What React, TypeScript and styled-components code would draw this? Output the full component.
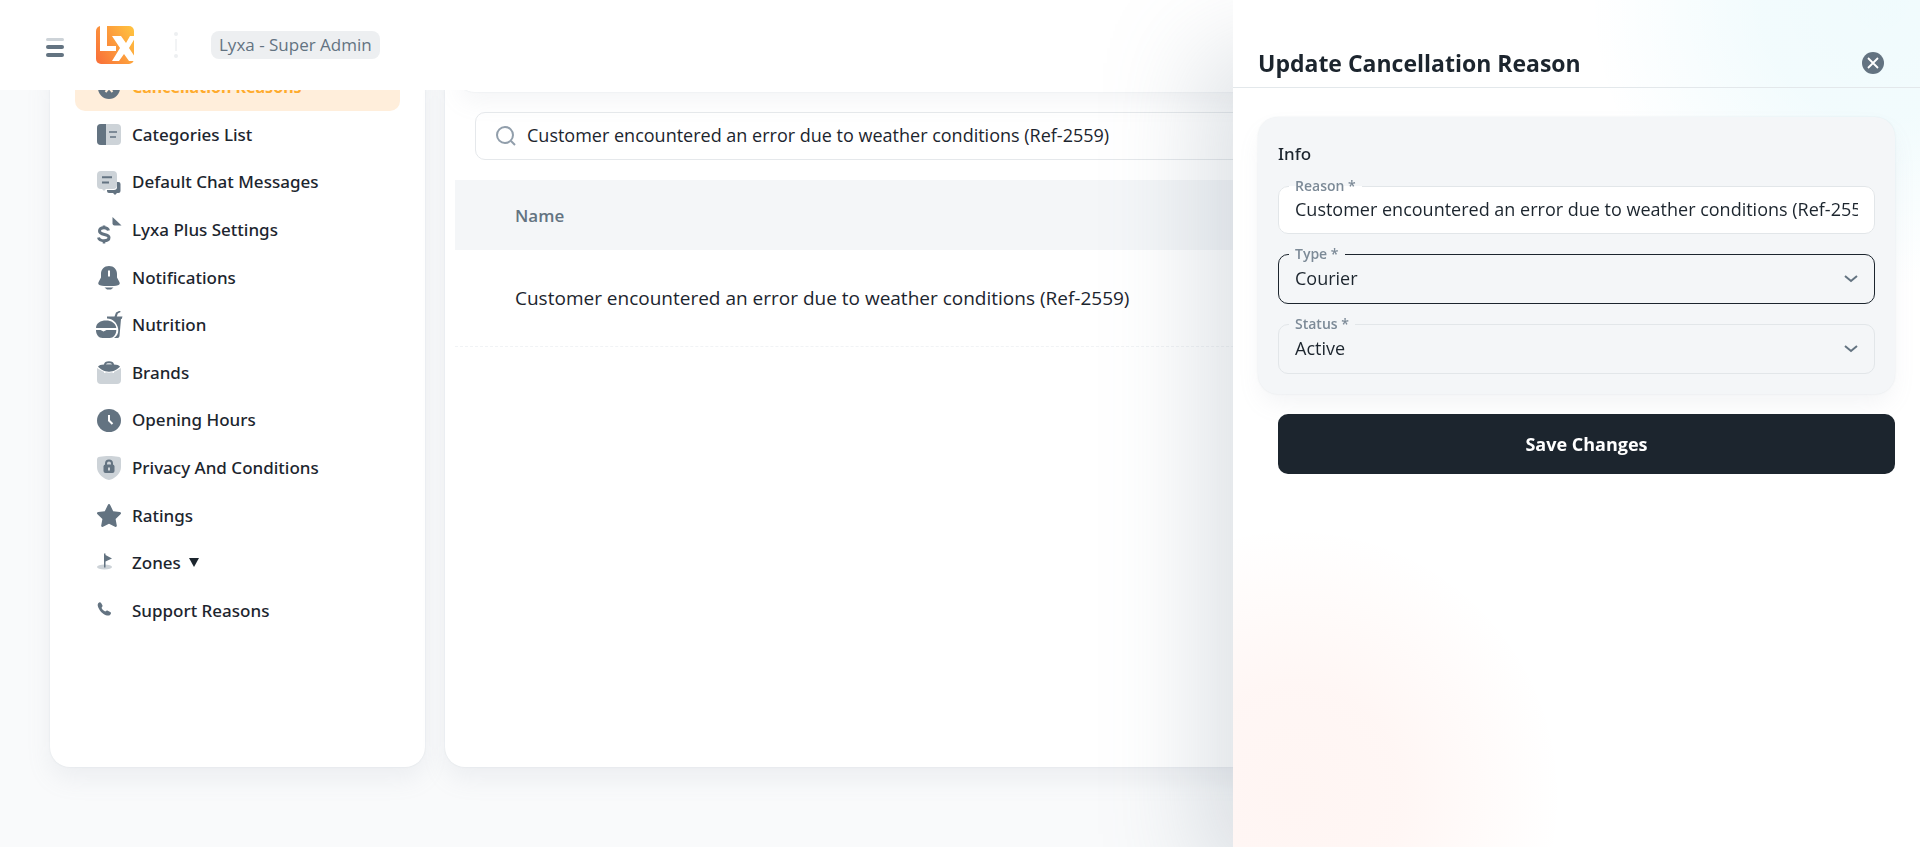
import React from "react";
import styled, { createGlobalStyle, css } from "styled-components";

const SANS = '"Open Sans", "Noto Sans", sans-serif';
const MEDIUM_SANS = '"Noto Sans", "Open Sans", sans-serif';

const GlobalStyle = createGlobalStyle`
  *, *::before, *::after { box-sizing: border-box; }
  body {
    margin: 0;
    background: #f9fafb;
    color: #1c252e;
    font-family: ${SANS};
    font-size: 17px;
  }
  button, input, select { font-family: inherit; color: inherit; }
`;

const Page = styled.div`
  display: flex;
  flex-direction: column;
  height: 100vh;
  overflow: hidden;
`;

const Header = styled.header`
  position: relative;
  z-index: 1;
  display: flex;
  flex: none;
  align-items: center;
  height: 90px;
  padding: 0 44px;
  background: #fff;
`;

const MenuButton = styled.button`
  display: flex;
  padding: 0;
  border: 0;
  background: none;
  cursor: pointer;
`;

const LogoLink = styled.a`
  display: flex;
  margin-left: 29px;
`;

const Separator = styled.svg`
  margin-left: 38px;
`;

const RoleBadge = styled.span`
  margin-left: 32px;
  padding: 0 8px;
  border-radius: 8px;
  background: #edeff1;
  color: #637381;
  font-size: 17px;
  line-height: 28px;
`;

const Body = styled.div`
  display: grid;
  grid-template-columns: 375px minmax(0, 1fr);
  gap: 20px;
  flex: 1;
  margin-top: -27px;
  padding: 0 50px 80px;
`;

const cardShadow = css`
  box-shadow: 0 0 2px rgba(145, 158, 171, 0.2), 0 12px 24px -4px rgba(145, 158, 171, 0.12);
`;

const Sidebar = styled.aside`
  padding: 0 25px;
  border-radius: 0 0 20px 20px;
  background: #fff;
  box-shadow: 0 0 2px rgba(145, 158, 171, 0.2), 0 12px 24px rgba(145, 158, 171, 0.12);
`;

const NavList = styled.ul`
  display: grid;
  grid-auto-rows: 1fr;
  height: 571px;
  margin: 0;
  padding: 0;
  list-style: none;
`;

const NavLink = styled.a<{ $active?: boolean }>`
  display: flex;
  align-items: center;
  gap: 8px;
  height: 100%;
  padding-left: 21px;
  border-radius: 10px;
  background: ${(p) => (p.$active ? "#ffeedb" : "transparent")};
  color: ${(p) => (p.$active ? "#ffab2d" : "#1c252e")};
  font-family: ${MEDIUM_SANS};
  font-size: ${(p) => (p.$active ? 16 : 17)}px;
  font-weight: ${(p) => (p.$active ? 700 : 500)};
  text-decoration: none;
`;

const Main = styled.main`
  display: flex;
  flex-direction: column;
  border-radius: 0 0 20px 20px;
  background: #fff;
  box-shadow: 0 0 2px rgba(145, 158, 171, 0.2), 0 12px 24px rgba(145, 158, 171, 0.12);
`;

const FilterCard = styled.section`
  flex: none;
  height: 29px;
  margin: 0 10px;
  border-radius: 0 0 20px 20px;
  background: #fff;
  ${cardShadow}
`;

const SearchBox = styled.label`
  display: flex;
  flex: none;
  align-items: center;
  gap: 10px;
  height: 48px;
  margin: 20px 30px;
  padding: 0 20px;
  border: 1px solid #e5e8eb;
  border-radius: 10px;
`;

const SearchInput = styled.input`
  flex: 1;
  padding: 0 0 2px;
  border: 0;
  outline: 0;
  background: none;
  font-size: 18px;
`;

const TableArea = styled.div`
  padding: 0 10px;
`;

const Table = styled.table`
  width: 100%;
  border-collapse: collapse;
  text-align: left;

  th {
    height: 70px;
    padding: 0 60px;
    background: #f4f6f8;
    color: #637381;
    font-size: 17px;
    font-weight: 600;
  }
  td {
    height: 96px;
    padding: 0 60px;
    border-bottom: 1px dashed #f1f3f5;
    font-size: 19px;
  }
`;

const Drawer = styled.aside`
  position: fixed;
  z-index: 2;
  top: 0;
  right: 0;
  bottom: 0;
  display: flex;
  flex-direction: column;
  width: 687px;
  max-width: 100%;
  background:
    radial-gradient(circle at 94% 0, rgba(0, 184, 217, 0.06), rgba(0, 184, 217, 0.05) 120px, rgba(0, 184, 217, 0) 290px),
    radial-gradient(circle at 60px 94%, rgba(255, 86, 48, 0.06), rgba(255, 86, 48, 0.05) 110px, rgba(255, 86, 48, 0) 270px),
    #fff;
  box-shadow: -40px 40px 90px -8px rgba(125, 140, 155, 0.25);
`;

const DrawerHeader = styled.header`
  display: flex;
  align-items: center;
  justify-content: space-between;
  height: 88px;
  padding: 38px 35px 0 25px;
  border-bottom: 1px solid #e3e8eb;
`;

const DrawerTitle = styled.h1`
  margin: 0;
  font-size: 23px;
  font-weight: 700;
  line-height: 40px;
`;

const CloseButton = styled.button`
  display: flex;
  padding: 0;
  border: 0;
  background: none;
  cursor: pointer;
`;

const Form = styled.form`
  display: flex;
  flex-direction: column;
  gap: 20px;
  padding: 29px 25px;
`;

const InfoCard = styled.section`
  display: flex;
  flex-direction: column;
  gap: 10px;
  padding: 24px 20px 20px;
  border-radius: 20px;
  background: #f4f6f8;
  ${cardShadow}
`;

const SectionTitle = styled.h2`
  margin: 0;
  font-family: ${MEDIUM_SANS};
  font-size: 17px;
  font-weight: 500;
  line-height: 25px;
`;

const Field = styled.fieldset<{ $active?: boolean; $filled?: boolean }>`
  position: relative;
  min-width: 0;
  margin: 0;
  padding: 0 10px;
  border: 1px solid ${(p) => (p.$active ? "#1c252e" : "#e2e6e9")};
  border-radius: 10px;
  background: ${(p) => (p.$filled ? "#fff" : "transparent")};
`;

const Legend = styled.legend`
  padding: 0 6px;
  color: #7c8a97;
  font-size: 14px;
  font-weight: 600;
  line-height: 20px;
`;

const TextInput = styled.input`
  display: block;
  width: 100%;
  height: 37px;
  padding: 0 0 12px;
  border: 6px solid transparent;
  border-width: 0 6px;
  outline: 0;
  background: none;
  font-size: 18px;
`;

const Select = styled.select`
  display: block;
  width: 100%;
  height: 39px;
  padding: 0 6px 12px;
  border: 0;
  outline: 0;
  appearance: none;
  background: none;
  font-size: 18px;
`;

const Chevron = styled.svg`
  position: absolute;
  right: 16px;
  bottom: 20px;
  pointer-events: none;
`;

const SaveButton = styled.button`
  height: 60px;
  margin-left: 20px;
  border: 0;
  border-radius: 10px;
  background: #1c252e;
  color: #fff;
  font-size: 18px;
  font-weight: 700;
  cursor: pointer;
`;

const DARK = "#637381";
const LIGHT = "#cdd3d8";

const icons = {
  cancel: (
    <>
      <circle cx="12" cy="12" r="11" fill={DARK} />
      <path d="M8.500 8l7 8M15.500 8l-7 8" stroke="#ffeedb" strokeWidth="2" />
    </>
  ),
  categories: (
    <>
      <rect x="0" y="1" width="24" height="21" rx="4" fill={LIGHT} />
      <path d="M4 1h5v21H4a4 4 0 0 1-4-4V5a4 4 0 0 1 4-4z" fill={DARK} />
      <path d="M12 9h8M13 14h6" stroke={DARK} strokeWidth="1.500" />
    </>
  ),
  chat: (
    <>
      <path d="M20 11h1.500a2 2 0 0 1 2 2v7a2 2 0 0 1-2 2H20l-2 2-2-2h-4a2 2 0 0 1-2-2v-1h7a3 3 0 0 0 3-3z" fill={DARK} />
      <path d="M4 0h12a4 4 0 0 1 4 4v10a4 4 0 0 1-4 4H9l-2 2-2-2H4a4 4 0 0 1-4-4V4a4 4 0 0 1 4-4z" fill={LIGHT} />
      <path d="M5 6.200h10M5 11.500h7" stroke={DARK} strokeWidth="2" />
    </>
  ),
  plus: (
    <>
      <path d="M15.500-2l9 8.500h-7a2 2 0 0 1-2-2z" fill={DARK} />
      <path d="M11.500 11.500C11 9.500 9 8.800 7 8.800c-2.500 0-4.500 1-4.500 3.200 0 4.800 9.500 2.200 9.500 6.500 0 2-2 3.200-5 3.200S2 20.500 1.500 18.500" fill="none" stroke={DARK} strokeWidth="3" />
      <path d="M7 6.500v3M7 21v3.500" stroke={DARK} strokeWidth="2.600" />
    </>
  ),
  bell: (
    <>
      <path d="M12 0c-4.800 0-8 3.400-8 8v3.500L1.600 16c-.8 1.700-.2 2.800 1.400 3.200 5 1.200 13 1.200 18 0 1.600-.4 2.200-1.500 1.400-3.200L20 11.500V8c0-4.600-3.200-8-8-8z" fill={DARK} />
      <path d="M12 4.500v6" stroke="#fff" strokeWidth="2" />
      <path d="M7.500 21.500h9L14 23.500h-4z" fill={DARK} />
    </>
  ),
  nutrition: (
    <>
      <path d="M10 2.500h7.500l1.500-4 4-2 .6 1.600-2.800 1.400-1 3H25.500l-.8 2.500h-.7L22.500 22c-.2 1.200-.8 2-2 2h-3.500c3.500-2.500 5-6 4-10-1-5-5-9.500-11-9.500z" fill={DARK} />
      <path d="M-1 14C-1 9 3.500 6.500 9 6.500S18.500 9 19.300 14z" fill={DARK} />
      <path d="M-1 16h4.500l3 1.600 3-1.600h9.800c0 4.500-3 8-6.500 8H5.500C1.700 24-1 20.500-1 16z" fill={DARK} />
    </>
  ),
  brands: (
    <>
      <path d="M0 7c3 2 5 3 7 3.800V12h1.500v-.8c2.300.6 4.700.6 7 0v.8H17v-1.200C19 10 21 9 24 7v12a4 4 0 0 1-4 4H4a4 4 0 0 1-4-4z" fill={LIGHT} />
      <path d="M1 5.500c1-1.200 3-2 6-2C7.300 1.500 9 .3 12 .3s4.700 1.200 5 3.200c3 0 5 .8 6 2-2 2.500-6 5.200-11 5.200S3 8 1 5.500z" fill={DARK} />
      <path d="M9 3.500c.4-1.200 1.500-1.400 3-1.400s2.600.2 3 1.400z" fill={LIGHT} />
    </>
  ),
  clock: (
    <>
      <ellipse cx="12" cy="11.500" rx="12" ry="11.500" fill={DARK} />
      <path d="M12 6v5.500l3.500 3.500" fill="none" stroke="#fff" strokeWidth="2" />
    </>
  ),
  shield: (
    <>
      <path d="M3 .7C8-.2 16-.2 21 .7c2 .3 3 1 3 3V11c0 6-5 10.500-10 12.500-1.500.6-2.500.6-4 0C5 21.500 0 17 0 11V3.700c0-2 1-2.700 3-3z" fill={LIGHT} />
      <rect x="6.500" y="8.500" width="11" height="8.500" rx="2" fill={DARK} />
      <path d="M9 9V7.500a3 3 0 0 1 6 0V9" fill="none" stroke={DARK} strokeWidth="2" />
      <path d="M12 11.500v3" stroke={LIGHT} strokeWidth="2" />
    </>
  ),
  star: (
    <path d="M10.700 1.300c.6-1.600 2-1.600 2.600 0l2.900 5.900 6.600.9c1.400.2 1.600 1.300.7 2.100l-4.900 4.700 1.200 6.600c.2 1.300-.8 1.800-1.800 1.300L12 19.700l-6 3.100c-1 .5-2 0-1.800-1.300l1.200-6.600L.5 10.200c-.9-.8-.7-1.900.7-2.100l6.600-.9z" fill={DARK} />
  ),
  flag: (
    <>
      <ellipse cx="7.500" cy="15" rx="7.500" ry="2.500" fill={LIGHT} />
      <path d="M7 1.500v14h1.500V9.500L15 6.500 8.500 3V1.500z" fill={DARK} />
    </>
  ),
  phone: (
    <path d="M1.200 4.200c1-1.200 2.200-1.400 2.900-.2l1.300 2.300c.5 1-.3 1.700-.9 2.500.7 1.800 2 3 3.800 3.800.8-.6 1.500-1.400 2.500-.9l2.400 1.300c1.200.7 1 1.900-.2 2.900-1.300 1.100-3.700.8-6.400-.9C3.500 13-.8 6.800 1.200 4.200z" fill={DARK} />
  ),
};

const navItems: { label: string; icon: keyof typeof icons; active?: boolean; nested?: boolean }[] = [
  { label: "Cancellation Reasons", icon: "cancel", active: true },
  { label: "Categories List", icon: "categories" },
  { label: "Default Chat Messages", icon: "chat" },
  { label: "Lyxa Plus Settings", icon: "plus" },
  { label: "Notifications", icon: "bell" },
  { label: "Nutrition", icon: "nutrition" },
  { label: "Brands", icon: "brands" },
  { label: "Opening Hours", icon: "clock" },
  { label: "Privacy And Conditions", icon: "shield" },
  { label: "Ratings", icon: "star" },
  { label: "Zones", icon: "flag", nested: true },
  { label: "Support Reasons", icon: "phone" },
];

const REASON = "Customer encountered an error due to weather conditions (Ref-2559)";

function NavIcon({ name }: { name: keyof typeof icons }) {
  return (
    <svg width="28" height="28" viewBox="-1 -3 28 28" aria-hidden="true">
      {icons[name]}
    </svg>
  );
}

function Logo() {
  return (
    <svg width="40" height="40" viewBox="0 0 40 40" role="img" aria-label="Lyxa">
      <defs>
        <linearGradient id="logoFill" x1="0" y1="0.800" x2="1" y2="0.200">
          <stop offset="0" stopColor="#f97339" />
          <stop offset="1" stopColor="#ffbf3f" />
        </linearGradient>
      </defs>
      <rect x="1" y="1" width="38" height="38" rx="5" fill="url(#logoFill)" />
      <path d="M5 0h7v21h9v5H5z" fill="#fff" />
      <path d="M17 11h9l5 7 4-7h5v2l-6 10 6 9v4h-6l-5-7-5 7h-7l8-13z" fill="#fff" />
    </svg>
  );
}

function SelectField({ id, label, value, options, active }: {
  id: string; label: string; value: string; options: string[]; active?: boolean;
}) {
  return (
    <Field $active={active}>
      <Legend><label htmlFor={id}>{label} *</label></Legend>
      <Select id={id} defaultValue={value}>
        {options.map((o) => <option key={o}>{o}</option>)}
      </Select>
      <Chevron width="14" height="8" viewBox="0 0 14 8" aria-hidden="true">
        <path d="M1 1l6 5 6-5" fill="none" stroke={DARK} strokeWidth="2" />
      </Chevron>
    </Field>
  );
}

const ZonesArrow = styled.svg`
  margin-bottom: 2px;
`;

export default function App() {
  return (
    <>
      <GlobalStyle />
      <Page>
        <Header>
          <MenuButton type="button" aria-label="Toggle menu">
            <svg width="22" height="24" viewBox="0 0 22 24">
              <rect x="2" y="5" width="18" height="3" rx="1.500" fill={LIGHT} />
              <rect x="2" y="12" width="18" height="4" rx="2" fill={DARK} />
              <rect x="2" y="20" width="18" height="4" rx="2" fill={DARK} />
            </svg>
          </MenuButton>
          <LogoLink href="#home"><Logo /></LogoLink>
          <Separator width="6" height="28" viewBox="0 0 6 28" aria-hidden="true">
            <circle cx="3" cy="3" r="2" fill="#edeff1" />
            <path d="M3 8v12" stroke="#e5e8eb" />
            <circle cx="3" cy="25" r="2" fill="#edeff1" />
          </Separator>
          <RoleBadge>Lyxa - Super Admin</RoleBadge>
        </Header>

        <Body>
          <Sidebar>
            <nav aria-label="Settings">
              <NavList>
                {navItems.map((item) => (
                  <li key={item.label}>
                    <NavLink href="#" $active={item.active} aria-current={item.active ? "page" : undefined}>
                      <NavIcon name={item.icon} />
                      {item.label}
                      {item.nested && (
                        <ZonesArrow width="10" height="10" viewBox="0 0 10 10" aria-hidden="true">
                          <path d="M0 1h10L5 10z" fill="#1c252e" />
                        </ZonesArrow>
                      )}
                    </NavLink>
                  </li>
                ))}
              </NavList>
            </nav>
          </Sidebar>

          <Main>
            <FilterCard />
            <SearchBox>
              <svg width="21" height="21" viewBox="0 0 21 21" fill="none" stroke="#919eab" strokeWidth="2" aria-hidden="true">
                <circle cx="9" cy="9" r="8" />
                <path d="M15 15l4 4" />
              </svg>
              <SearchInput type="text" aria-label="Search" defaultValue={REASON} />
            </SearchBox>
            <TableArea>
              <Table>
                <thead>
                  <tr><th scope="col">Name</th></tr>
                </thead>
                <tbody>
                  <tr><td>{REASON}</td></tr>
                </tbody>
              </Table>
            </TableArea>
          </Main>
        </Body>
      </Page>

      <Drawer aria-label="Update Cancellation Reason">
        <DrawerHeader>
          <DrawerTitle>Update Cancellation Reason</DrawerTitle>
          <CloseButton type="button" aria-label="Close">
            <svg width="24" height="24" viewBox="0 0 24 24">
              <circle cx="12" cy="12" r="11" fill={DARK} />
              <path d="M7 7l10 10M17 7l-10 10" stroke="#fff" strokeWidth="1.800" />
            </svg>
          </CloseButton>
        </DrawerHeader>
        <Form onSubmit={(e) => e.preventDefault()}>
          <InfoCard>
            <SectionTitle>Info</SectionTitle>
            <Field $filled>
              <Legend><label htmlFor="reason">Reason *</label></Legend>
              <TextInput id="reason" type="text" defaultValue={REASON} />
            </Field>
            <SelectField id="type" label="Type" value="Courier" options={["Courier", "Customer", "Shop"]} active />
            <SelectField id="status" label="Status" value="Active" options={["Active", "Inactive"]} />
          </InfoCard>
          <SaveButton type="submit">Save Changes</SaveButton>
        </Form>
      </Drawer>
    </>
  );
}
